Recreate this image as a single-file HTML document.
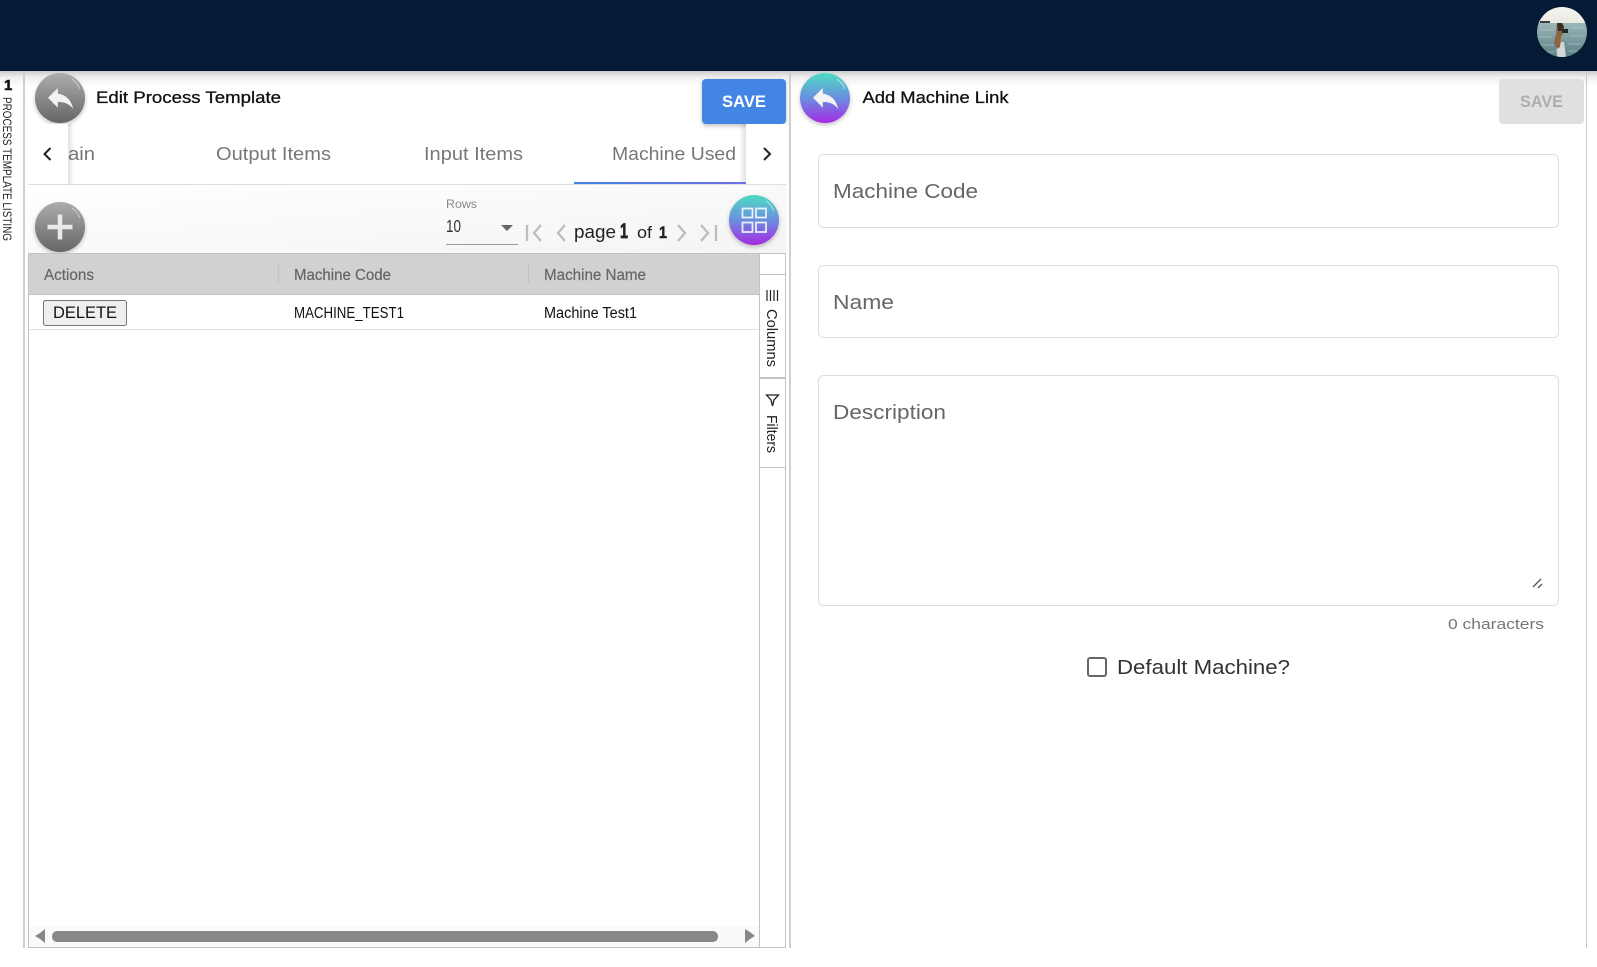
<!DOCTYPE html>
<html lang="en"><head><meta charset="utf-8"><title>Edit Process Template</title>
<style>
html,body{margin:0;padding:0;background:#fff;width:1597px;height:967px;overflow:hidden}
svg{display:block}
text{font-family:"Liberation Sans",sans-serif}
</style></head><body>
<svg xmlns="http://www.w3.org/2000/svg" width="1597" height="967" viewBox="0 0 1597 967">
<defs>
<linearGradient id="shadow" x1="0" y1="0" x2="0" y2="1"><stop offset="0" stop-color="#000" stop-opacity=".2"/><stop offset=".4" stop-color="#000" stop-opacity=".06"/><stop offset="1" stop-color="#000" stop-opacity="0"/></linearGradient>
<linearGradient id="gray" x1="0" y1="0" x2="0" y2="1"><stop offset="0" stop-color="#acacac"/><stop offset="1" stop-color="#666"/></linearGradient>
<linearGradient id="color" x1="0" y1="0" x2="0" y2="1"><stop offset="0" stop-color="#4edcc0"/><stop offset=".5" stop-color="#6a8fe0"/><stop offset="1" stop-color="#a52ae2"/></linearGradient>
<linearGradient id="tb" x1="0" y1="0" x2="1" y2="1"><stop offset="0" stop-color="#fff"/><stop offset="1" stop-color="#f4f4f4"/></linearGradient>
<linearGradient id="tabline" x1="0" y1="0" x2="1" y2="0"><stop offset="0" stop-color="#4285e4"/><stop offset="1" stop-color="#6f6fe8"/></linearGradient>
<linearGradient id="sshadow" x1="0" y1="0" x2="1" y2="0"><stop offset="0" stop-color="#000" stop-opacity=".12"/><stop offset="1" stop-color="#000" stop-opacity="0"/></linearGradient>
<linearGradient id="sky" x1="0" y1="0" x2="0" y2="1"><stop offset="0" stop-color="#f6f4ee"/><stop offset="1" stop-color="#e9e9e2"/></linearGradient>
<linearGradient id="sea" x1="0" y1="0" x2="0" y2="1"><stop offset="0" stop-color="#9ab6b8"/><stop offset="1" stop-color="#5a7f84"/></linearGradient>
<filter id="ds" x="-20%" y="-20%" width="140%" height="150%"><feDropShadow dx="0" dy="2" stdDeviation="2" flood-color="#000" flood-opacity=".24"/></filter>
<clipPath id="av"><circle cx="1562" cy="32" r="25"/></clipPath>
</defs>

<!-- top bar -->
<rect x="0" y="71" width="1597" height="16" fill="url(#shadow)"/>
<rect x="0" y="0" width="1597" height="71" fill="#051b35"/>
<g clip-path="url(#av)">
<rect x="1537" y="7" width="50" height="16" fill="url(#sky)"/>
<rect x="1537" y="23" width="50" height="34" fill="url(#sea)"/>
<path d="M1540 30h14M1570 28h14M1538 37h13M1570 36h15M1540 45h14M1568 44h13M1545 52h10M1568 51h9" stroke="#c2d4d4" stroke-opacity=".5" stroke-width="1"/>
<rect x="1540" y="21" width="10" height="2" fill="#35423f"/>
<path d="M1556 42h8l2 15h-9z" fill="#d3d7d9"/>
<path d="M1563 33l-2 10h-5l1-10z" fill="#c49a78"/>
<path d="M1557 23h5l2 4-1 6-2 5-1 9-3 2-3-6 2-9z" fill="#8a6644"/>
<path d="M1557 23h5l2 4-1 4h-5z" fill="#3b2c20"/>
<rect x="1562" y="29" width="6" height="4" fill="#1f2a2c"/>
</g>

<!-- sidebar -->
<rect x="23" y="71" width="2" height="877" fill="#cfcfcf"/>
<text x="4" y="90" font-size="15" font-weight="bold" fill="#111" stroke="#111" stroke-width=".5">1</text>
<text transform="translate(3,97) rotate(90)" font-size="11.500" fill="#222" textLength="144" lengthAdjust="spacingAndGlyphs">PROCESS TEMPLATE LISTING</text>

<!-- dividers -->
<rect x="789" y="71" width="2" height="877" fill="#cfcfcf"/>
<rect x="1586" y="71" width="1" height="877" fill="#c8c8c8"/>

<!-- left header -->
<g filter="url(#ds)"><circle cx="60" cy="98" r="25" fill="url(#gray)"/></g>
<path d="M72 79a22 22 0 0 1 8 10" fill="none" stroke="#fff" stroke-opacity=".55" stroke-width="1"/>
<path transform="translate(43.800,81) scale(1.4)" d="M10 9V5l-7 7 7 7v-4.100c5 0 8.500 1.600 11 5.100-1-5-4-10-11-11z" fill="#f2f2f2"/>
<text x="96" y="103" font-size="17" fill="#111" stroke="#111" stroke-width=".3" textLength="185" lengthAdjust="spacingAndGlyphs">Edit Process Template</text>
<g filter="url(#ds)"><rect x="702" y="79" width="84" height="45" rx="4" fill="#4285e4"/></g>
<text x="722" y="107" font-size="17" font-weight="bold" fill="#fff" textLength="44" lengthAdjust="spacingAndGlyphs">SAVE</text>

<!-- tabs -->
<rect x="28" y="184" width="758" height="1" fill="#dedede"/>
<text x="68" y="160" font-size="18.500" fill="#777" textLength="27" lengthAdjust="spacingAndGlyphs">ain</text>
<text x="216" y="160" font-size="18.500" fill="#777" textLength="115" lengthAdjust="spacingAndGlyphs">Output Items</text>
<text x="424" y="160" font-size="18.500" fill="#777" textLength="99" lengthAdjust="spacingAndGlyphs">Input Items</text>
<text x="612" y="160" font-size="18.500" fill="#777" textLength="124" lengthAdjust="spacingAndGlyphs">Machine Used</text>
<rect x="574" y="182" width="172" height="2" fill="url(#tabline)"/>
<rect x="28" y="124" width="40" height="60" fill="#fff"/>
<rect x="68" y="124" width="6" height="60" fill="url(#sshadow)"/>
<path d="M50.500 148l-6 6 6 6" fill="none" stroke="#222" stroke-width="2"/>
<rect x="739" y="124" width="7" height="58" fill="url(#sshadow)" transform="matrix(-1 0 0 1 1485 0)"/>
<rect x="746" y="124" width="40" height="60" fill="#fff"/>
<path d="M764 148l6 6-6 6" fill="none" stroke="#222" stroke-width="2"/>

<!-- toolbar -->
<rect x="28" y="185" width="758" height="68" fill="url(#tb)"/>
<g filter="url(#ds)"><circle cx="60" cy="227" r="25" fill="url(#gray)"/></g>
<path d="M72 208a22 22 0 0 1 8 10" fill="none" stroke="#fff" stroke-opacity=".55" stroke-width="1"/>
<path d="M60 214.500v25M47.500 227h25" stroke="#e9e9e9" stroke-width="4.500" fill="none"/>
<text x="446" y="208" font-size="12" fill="#888" textLength="31" lengthAdjust="spacingAndGlyphs">Rows</text>
<text x="446" y="232" font-size="17.500" fill="#333" textLength="15" lengthAdjust="spacingAndGlyphs">10</text>
<path d="M501 225h12l-6 6z" fill="#666"/>
<rect x="446" y="244" width="72" height="1" fill="#999"/>
<g fill="none" stroke="#bdbdbd" stroke-width="2.300">
<path d="M527 225v16M541 225l-7 8 7 8"/>
<path d="M565 225l-7 8 7 8"/>
<path d="M678 225l7 8-7 8"/>
<path d="M701 225l7 8-7 8M716 225v16"/>
</g>
<text x="574" y="238" font-size="18.500" fill="#222" textLength="42" lengthAdjust="spacingAndGlyphs">page</text>
<text x="620" y="238" font-size="21" font-weight="bold" fill="#222" stroke="#222" stroke-width=".7" textLength="8" lengthAdjust="spacingAndGlyphs">1</text>
<text x="637" y="238" font-size="17" fill="#222" textLength="15" lengthAdjust="spacingAndGlyphs">of</text>
<text x="659" y="238" font-size="17" font-weight="bold" fill="#222" stroke="#222" stroke-width=".5" textLength="8" lengthAdjust="spacingAndGlyphs">1</text>
<g filter="url(#ds)"><circle cx="754" cy="220" r="25" fill="url(#color)"/></g>
<path d="M766 201a22 22 0 0 1 8 10" fill="none" stroke="#fff" stroke-opacity=".6" stroke-width="1"/>
<g fill="none" stroke="#e8eefc" stroke-width="1.800">
<rect x="742.500" y="208.500" width="10" height="9"/>
<rect x="756" y="208.500" width="10" height="9"/>
<rect x="742.500" y="222.500" width="10" height="9.500"/>
<rect x="756" y="222.500" width="10" height="9.500"/>
</g>

<!-- grid -->
<rect x="28" y="253" width="731" height="41" fill="#d1d1d1"/>
<rect x="28" y="253" width="731" height="1" fill="#bdc3c7"/>
<rect x="28" y="294" width="731" height="1" fill="#bdc3c7"/>
<rect x="28" y="253" width="1" height="695" fill="#bdc3c7"/>
<rect x="785" y="253" width="1" height="695" fill="#bdc3c7"/>
<rect x="28" y="947" width="758" height="1" fill="#bdc3c7"/>
<rect x="759" y="253" width="27" height="1" fill="#bdc3c7"/>
<rect x="759" y="253" width="1" height="695" fill="#bdc3c7"/>
<rect x="278" y="264" width="1" height="20" fill="#c0c4c8"/>
<rect x="528" y="264" width="1" height="20" fill="#c0c4c8"/>
<text x="44" y="280" font-size="15.500" fill="#666" stroke="#666" stroke-width=".2" textLength="50" lengthAdjust="spacingAndGlyphs">Actions</text>
<text x="294" y="280" font-size="15.500" fill="#666" stroke="#666" stroke-width=".2" textLength="97" lengthAdjust="spacingAndGlyphs">Machine Code</text>
<text x="544" y="280" font-size="15.500" fill="#666" stroke="#666" stroke-width=".2" textLength="102" lengthAdjust="spacingAndGlyphs">Machine Name</text>
<rect x="29" y="329" width="730" height="1" fill="#dde2e4"/>
<rect x="43.500" y="300.500" width="83" height="25" rx="2" fill="#efefef" stroke="#767676"/>
<text x="53" y="318" font-size="17" fill="#111" textLength="64" lengthAdjust="spacingAndGlyphs">DELETE</text>
<text x="294" y="318" font-size="15.500" fill="#111" textLength="110" lengthAdjust="spacingAndGlyphs">MACHINE_TEST1</text>
<text x="544" y="318" font-size="15.500" fill="#111" textLength="93" lengthAdjust="spacingAndGlyphs">Machine Test1</text>

<!-- side bar -->
<rect x="760" y="274" width="25" height="1" fill="#bdc3c7"/>
<rect x="760" y="377" width="25" height="2" fill="#bdc3c7"/>
<rect x="760" y="467" width="25" height="1" fill="#bdc3c7"/>
<path d="M767 290v11M770.500 290v11M774 290v11M777.500 290v11" stroke="#222" stroke-width="1.200" fill="none"/>
<text transform="translate(767,309) rotate(90)" font-size="15" fill="#222" textLength="58" lengthAdjust="spacingAndGlyphs">Columns</text>
<path d="M766.500 395h12l-4.500 5-1.500 6-1.500-6z" fill="none" stroke="#222" stroke-width="1.300"/>
<text transform="translate(767,415) rotate(90)" font-size="15" fill="#222" textLength="38" lengthAdjust="spacingAndGlyphs">Filters</text>

<!-- scrollbar -->
<rect x="29" y="926" width="730" height="21" fill="#fafafa"/>
<path d="M45 930l-5 4-5 3 5 3 5 4z" fill="#888" transform="translate(0,-1)"/>
<rect x="52" y="931" width="666" height="11" rx="5" fill="#888"/>
<path d="M745 930l5 3 5 4-5 3-5 4z" fill="#888" transform="translate(0,-1)"/>

<!-- right panel header -->
<g filter="url(#ds)"><circle cx="825" cy="98" r="25" fill="url(#color)"/></g>
<path d="M837 79a22 22 0 0 1 8 10" fill="none" stroke="#fff" stroke-opacity=".6" stroke-width="1"/>
<path transform="translate(808.800,81) scale(1.4)" d="M10 9V5l-7 7 7 7v-4.100c5 0 8.500 1.600 11 5.100-1-5-4-10-11-11z" fill="#f2f2f2"/>
<text x="862.500" y="103" font-size="17" fill="#111" stroke="#111" stroke-width=".3" textLength="146" lengthAdjust="spacingAndGlyphs">Add Machine Link</text>
<rect x="1499" y="79" width="85" height="45" rx="4" fill="#e0e0e0"/>
<text x="1520" y="107" font-size="17" font-weight="bold" fill="#adadad" textLength="43" lengthAdjust="spacingAndGlyphs">SAVE</text>

<!-- form -->
<g fill="#fff" stroke="#dedede">
<rect x="818.500" y="154.500" width="740" height="73" rx="5"/>
<rect x="818.500" y="265.500" width="740" height="72" rx="5"/>
<rect x="818.500" y="375.500" width="740" height="230" rx="5"/>
</g>
<text x="833" y="198" font-size="20.500" fill="#666" textLength="145" lengthAdjust="spacingAndGlyphs">Machine Code</text>
<text x="833" y="309" font-size="20.500" fill="#666" textLength="61" lengthAdjust="spacingAndGlyphs">Name</text>
<text x="833" y="419" font-size="20.500" fill="#666" textLength="113" lengthAdjust="spacingAndGlyphs">Description</text>
<path d="M1533 587l8-8M1538 588l4-4" stroke="#555" stroke-width="1.300" fill="none"/>
<text x="1448" y="629" font-size="15" fill="#777" textLength="96" lengthAdjust="spacingAndGlyphs">0 characters</text>
<rect x="1088" y="658" width="18" height="18" rx="2" fill="#fff" stroke="#666" stroke-width="2"/>
<text x="1117" y="674" font-size="20" fill="#333" textLength="173" lengthAdjust="spacingAndGlyphs">Default Machine?</text>
</svg>
</body></html>
